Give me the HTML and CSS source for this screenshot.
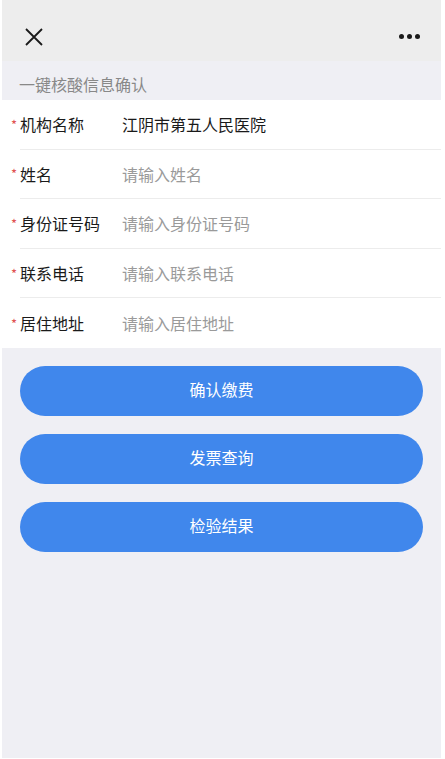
FILE: index.html
```html
<!DOCTYPE html>
<html lang="zh-CN">
<head>
  <meta charset="UTF-8">
  <title>一键核酸信息确认</title>
  <link rel="stylesheet" href="styles.css">
</head>
<body>

  <div class="page">
    <div class="topbar">
      <svg class="close" width="18" height="18" viewBox="0 0 18 18">
        <path d="M1 1 L17 17 M17 1 L1 17" stroke="#1a1a1a" stroke-width="1.8" fill="none"/>
      </svg>
      <div class="more"><span></span><span></span><span></span></div>
    </div>

    <div class="section-title">一键核酸信息确认</div>

    <div class="form">
      <div class="row">
        <label><i>*</i>机构名称</label>
        <div class="value">江阴市第五人民医院</div>
      </div>
      <div class="row">
        <label><i>*</i>姓名</label>
        <input type="text" placeholder="请输入姓名">
      </div>
      <div class="row">
        <label><i>*</i>身份证号码</label>
        <input type="text" placeholder="请输入身份证号码">
      </div>
      <div class="row">
        <label><i>*</i>联系电话</label>
        <input type="text" placeholder="请输入联系电话">
      </div>
      <div class="row">
        <label><i>*</i>居住地址</label>
        <input type="text" placeholder="请输入居住地址">
      </div>
    </div>

    <div class="actions">
      <button class="btn">确认缴费</button>
      <button class="btn">发票查询</button>
      <button class="btn">检验结果</button>
    </div>
  </div>

</body>
</html>
```

FILE: styles.css
```css
body { margin: 0; background: #fff; font-family: "Noto Sans CJK SC", "Noto Sans", sans-serif; }
.page { margin: 0 4px 0 2px; height: 758px; background: #efeff4; }

.topbar { height: 61px; background: #ededed; display: flex; align-items: center; justify-content: space-between; padding: 0 21px 0 23px; }
.close { display: block; margin-top: 12px; }
.more { display: flex; gap: 3px; margin-top: 12px; }
.more span { width: 5px; height: 5px; border-radius: 50%; background: #1a1a1a; }

.section-title { height: 39px; line-height: 46px; padding-left: 17px; font-size: 16px; color: #888; }

.form { background: #fff; }
.row { box-sizing: border-box; height: 49.6px; margin-left: 18px; display: flex; align-items: center; border-bottom: 1px solid #ececec; }
.row:last-child { border-bottom: none; }
.row label { width: 111px; margin-left: -9px; font-size: 16px; color: #1a1a1a; display: flex; align-items: center; }
.row label i { font-style: normal; color: #e0514f; font-size: 13px; width: 9px; }
.row .value, .row input { flex: 1; font-size: 16px; color: #1a1a1a; font-family: inherit; }
.row input { border: none; outline: none; padding: 0; background: none; }
.row input::placeholder { color: #9a9a9a; }

.actions { padding: 18px 18px 0 18px; display: flex; flex-direction: column; gap: 18px; }
.btn { height: 50px; padding: 0 0 3px; border: none; border-radius: 25px; background: #4087ec; color: #fff; font-size: 16px; font-family: inherit; }
```
